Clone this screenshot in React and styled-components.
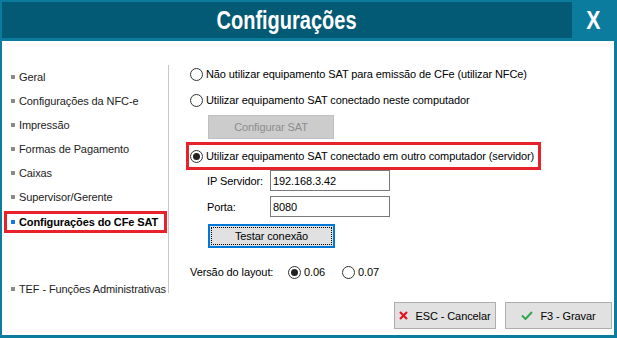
import React from 'react';
import styled, { createGlobalStyle, css } from 'styled-components';

const GlobalStyle = createGlobalStyle`
  html, body {
    margin: 0;
    padding: 0;
    background: #ffffff;
  }
  body {
    font-family: 'Liberation Sans', Arial, sans-serif;
    font-size: 11px;
    letter-spacing: -0.1px;
    color: #000;
  }
`;

const Window = styled.div`
  display: flex;
  flex-direction: column;
  box-sizing: border-box;
  width: 617px;
  height: 338px;
  background: #0b7c9e;
  border-style: solid;
  border-color: #0b7c9e;
  border-width: 2px 3px 3px 2px;
`;

const TitleBar = styled.div`
  display: flex;
  height: 36px;
  margin-bottom: 3px;
`;

const Title = styled.div`
  flex: 1;
  display: flex;
  align-items: center;
  justify-content: center;
  background: #025a74;
  color: #fff;
  font-family: 'Liberation Sans', Arial, sans-serif;
  font-weight: bold;
  font-size: 25px;
  letter-spacing: 0;
`;

const Condensed = styled.span`
  display: inline-block;
  transform: scaleX(${(p) => p.$scale || 0.8});
`;

const CloseButton = styled.div`
  display: flex;
  align-items: center;
  justify-content: center;
  width: 42px;
  color: #fff;
  font-family: 'Liberation Sans', Arial, sans-serif;
  font-weight: bold;
  font-size: 25px;
  letter-spacing: 0;
`;

const Body = styled.div`
  flex: 1;
  display: flex;
  flex-direction: column;
  background: #fff;
`;

const Main = styled.div`
  flex: 1;
  display: flex;
`;

const Sidebar = styled.div`
  display: flex;
  flex-direction: column;
  flex-shrink: 0;
  box-sizing: border-box;
  width: 167px;
  height: 228px;
  margin-top: 24px;
  border-right: 1px solid #c8c8c8;
`;

const NavItem = styled.div`
  display: flex;
  align-items: center;
  flex-shrink: 0;
  gap: 4px;
  box-sizing: border-box;
  height: 24px;
  margin: 0 1px 0 2px;
  padding-left: 7px;
  color: #222;
  white-space: nowrap;

  &::before {
    content: '';
    width: 4px;
    height: 4px;
    background: ${(p) => (p.$active ? '#1478e0' : '#8a8a8a')};
  }

  ${(p) =>
    p.$active &&
    css`
      height: 22px;
      margin-top: 2px;
      border: 3px solid #e8212b;
      padding-left: 4px;
      font-weight: bold;
      color: #000;
    `}
`;

const NavSpacer = styled.div`
  flex-shrink: 0;
  height: ${(p) => p.$h}px;
`;

const Panel = styled.div`
  display: flex;
  flex-direction: column;
  align-items: flex-start;
  padding: 23px 0 0 21px;
`;

const RadioRow = styled.label`
  display: flex;
  align-items: center;
  gap: 3px;
  height: 20px;
  white-space: nowrap;
  margin-top: ${(p) => p.$mt || 0}px;
`;

const RadioCircle = styled.span`
  position: relative;
  flex-shrink: 0;
  box-sizing: border-box;
  width: 13px;
  height: 13px;
  border: 1px solid #333;
  border-radius: 50%;
  background: #fff;

  ${(p) =>
    p.$checked &&
    css`
      &::after {
        content: '';
        position: absolute;
        left: 2px;
        top: 2px;
        width: 7px;
        height: 7px;
        border-radius: 50%;
        background: #222;
      }
    `}
`;

const HighlightBox = styled.div`
  display: flex;
  align-items: center;
  box-sizing: border-box;
  width: 355px;
  height: 28px;
  margin: 3px 0 0 -4px;
  padding-left: 1px;
  border: 3px solid #e8212b;
`;

const Button = styled.div`
  position: relative;
  display: flex;
  align-items: center;
  justify-content: center;
  gap: 7px;
  box-sizing: border-box;
  width: ${(p) => p.$w}px;
  height: ${(p) => p.$h || 24}px;
  margin-left: ${(p) => p.$ml || 0}px;
  margin-top: ${(p) => p.$mt || 0}px;
  background: #e1e1e1;
  border: 1px solid #adadad;
  color: #000;
  white-space: nowrap;

  ${(p) =>
    p.$disabled &&
    css`
      background: #cccccc;
      border-color: #bfbfbf;
      color: #8d8d8d;
    `}

  ${(p) =>
    p.$focused &&
    css`
      border: 2px solid #0078d7;
      &::after {
        content: '';
        position: absolute;
        inset: 1px;
        border: 1px dotted #000;
      }
    `}
`;

const FieldRow = styled.div`
  display: flex;
  align-items: center;
  margin: ${(p) => p.$mt || 0}px 0 0 17px;
`;

const FieldLabel = styled.span`
  width: 63px;
`;

const Input = styled.div`
  display: flex;
  align-items: center;
  box-sizing: border-box;
  width: 120px;
  height: 21px;
  padding-left: 2px;
  border: 1px solid #7a7a7a;
  background: #fff;
`;

const LayoutRow = styled.div`
  display: flex;
  align-items: center;
  height: 20px;
  margin-top: 14px;
`;

const LayoutLabel = styled.span`
  width: 98px;
`;

const LayoutOption = styled.label`
  display: flex;
  align-items: center;
  gap: 3px;
  width: ${(p) => p.$w}px;
`;

const Footer = styled.div`
  display: flex;
  justify-content: flex-end;
  gap: 9px;
  padding: 0 2px 6px 0;
`;

const XIcon = () => (
  <svg width="9" height="9" viewBox="0 0 9 9">
    <path d="M1 1 L8 8 M8 1 L1 8" stroke="#e4141e" strokeWidth="2.2" fill="none" />
  </svg>
);

const CheckIcon = () => (
  <svg width="12" height="9" viewBox="0 0 12 9">
    <path d="M1 4.5 L4.5 8 L11 1" stroke="#2fa84f" strokeWidth="2" fill="none" />
  </svg>
);

const navItems = [
  'Geral',
  'Configurações da NFC-e',
  'Impressão',
  'Formas de Pagamento',
  'Caixas',
  'Supervisor/Gerente',
];

export default function App() {
  return (
    <>
      <GlobalStyle />
      <Window>
        <TitleBar>
          <Title>
            <Condensed>Configurações</Condensed>
          </Title>
          <CloseButton>
            <Condensed $scale={0.85}>X</Condensed>
          </CloseButton>
        </TitleBar>
        <Body>
          <Main>
            <Sidebar>
              {navItems.map((item) => (
                <NavItem key={item}>{item}</NavItem>
              ))}
              <NavItem $active>Configurações do CFe SAT</NavItem>
              <NavSpacer $h={44} />
              <NavItem>TEF - Funções Administrativas</NavItem>
            </Sidebar>
            <Panel>
              <RadioRow>
                <RadioCircle />
                Não utilizar equipamento SAT para emissão de CFe (utilizar NFCe)
              </RadioRow>
              <RadioRow $mt={6}>
                <RadioCircle />
                Utilizar equipamento SAT conectado neste computador
              </RadioRow>
              <Button $w={126} $ml={18} $mt={5} $disabled>Configurar SAT</Button>
              <HighlightBox>
                <RadioRow>
                  <RadioCircle $checked />
                  Utilizar equipamento SAT conectado em outro computador (servidor)
                </RadioRow>
              </HighlightBox>
              <FieldRow>
                <FieldLabel>IP Servidor:</FieldLabel>
                <Input>192.168.3.42</Input>
              </FieldRow>
              <FieldRow $mt={5}>
                <FieldLabel>Porta:</FieldLabel>
                <Input>8080</Input>
              </FieldRow>
              <Button $w={127} $ml={18} $mt={7} $focused>Testar conexão</Button>
              <LayoutRow>
                <LayoutLabel>Versão do layout:</LayoutLabel>
                <LayoutOption $w={54}>
                  <RadioCircle $checked />
                  0.06
                </LayoutOption>
                <LayoutOption $w={50}>
                  <RadioCircle />
                  0.07
                </LayoutOption>
              </LayoutRow>
            </Panel>
          </Main>
          <Footer>
            <Button $w={102} $h={27}>
              <XIcon />
              ESC - Cancelar
            </Button>
            <Button $w={107} $h={27}>
              <CheckIcon />
              F3 - Gravar
            </Button>
          </Footer>
        </Body>
      </Window>
    </>
  );
}
